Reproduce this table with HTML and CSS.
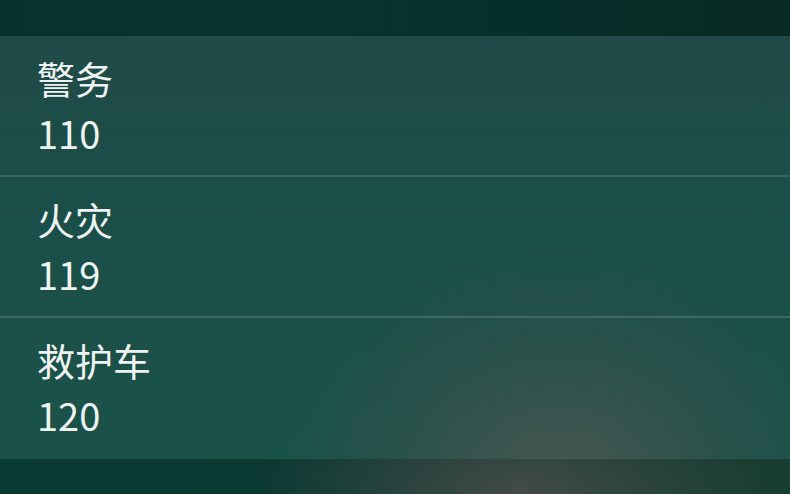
FILE: index.html
```html
<!DOCTYPE html>
<html lang="zh-CN">
<head>
    <meta charset="UTF-8">
    <meta name="viewport" content="width=device-width, initial-scale=1.0">
    <title>紧急电话</title>
    <link rel="stylesheet" href="styles.css">
</head>
<body>
    <!-- Top strip -->
    <div class="top-bar"></div>

    <!-- Emergency numbers -->
    <div class="card">
        <div class="row">
            <div class="name">警务</div>
            <div class="num">110</div>
        </div>
        <div class="row">
            <div class="name">火灾</div>
            <div class="num">119</div>
        </div>
        <div class="row">
            <div class="name">救护车</div>
            <div class="num">120</div>
        </div>
    </div>

    <div class="bottom-bar"></div>
</body>
</html>
```

FILE: styles.css
```css
html, body {
    margin: 0;
    height: 100%;
}
body {
    font-family: "Noto Sans CJK SC", "Noto Sans", sans-serif;
    color: #eef3f1;
    background:
        radial-gradient(ellipse 260px 120px at 520px 494px, rgba(80, 78, 76, 0.8), transparent),
        linear-gradient(to right, #0a3a34, #0c3a32 60%, #173e30);
    overflow: hidden;
}
.top-bar {
    height: 36px;
    background: linear-gradient(to right, #06322e, #063330 40%, #072a22);
}
.card {
    background:
        radial-gradient(ellipse 280px 240px at 560px 450px, rgba(82, 88, 84, 0.85), rgba(70, 80, 75, 0.3) 60%, transparent),
        linear-gradient(to bottom, #204a47, #1b4f49 45%, #1a5249);
}
.row {
    padding: 15px 37px 14px;
    border-bottom: 2px solid rgba(120, 150, 145, 0.35);
}
.row:last-child {
    border-bottom: none;
    padding-bottom: 16px;
}
.name {
    font-size: 38px;
    line-height: 54px;
}
.num {
    font-size: 38px;
    line-height: 56px;
}
.bottom-bar {
    height: 35px;
}
```
